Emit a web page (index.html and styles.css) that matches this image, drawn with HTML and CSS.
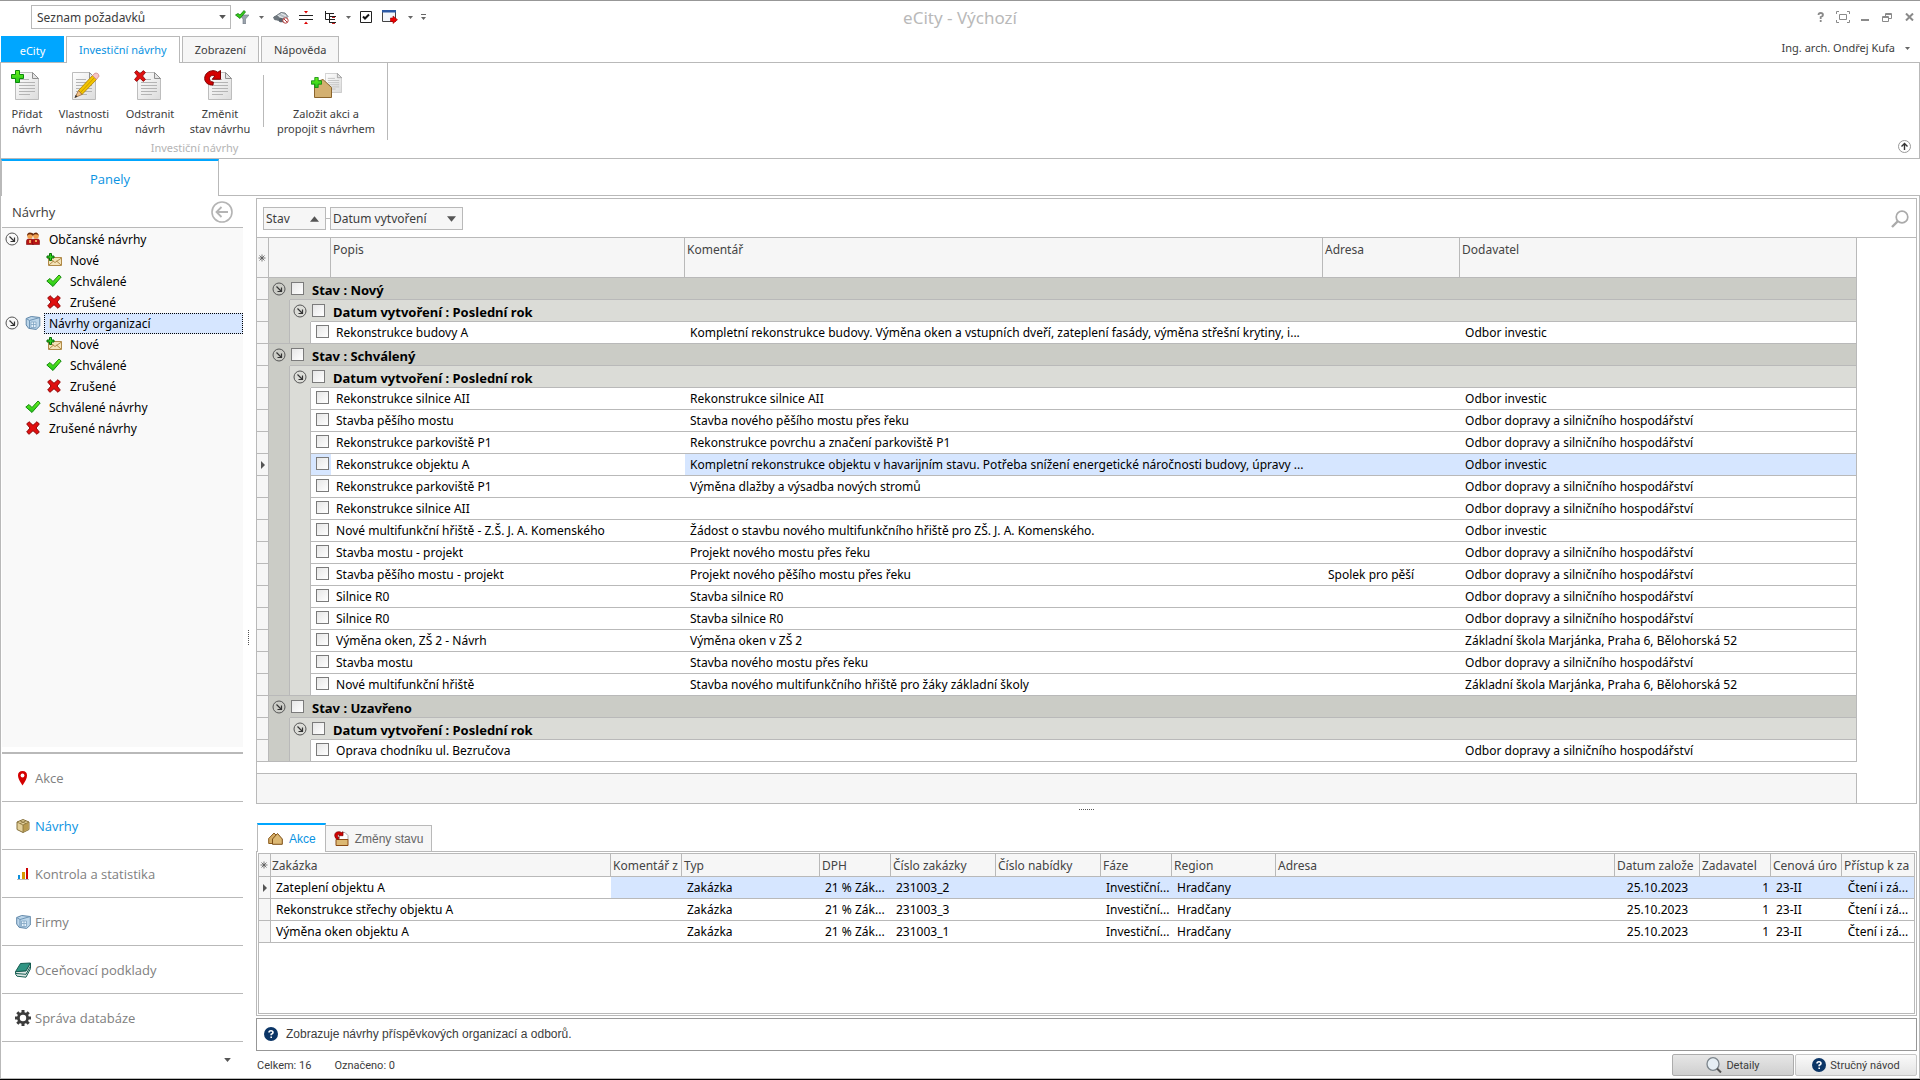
FILE: index.html
```html
<!DOCTYPE html>
<html lang="cs">
<head>
<meta charset="utf-8">
<title>eCity - Výchozí</title>
<link rel="stylesheet" href="styles.css">
</head>
<body>
<svg class="defs" aria-hidden="true">
  <defs>
    <linearGradient id="paper" x1="0" y1="0" x2="1" y2="1"><stop offset="0" stop-color="#fff"/><stop offset="1" stop-color="#dcdcdc"/></linearGradient>
    <linearGradient id="leaf" x1="0" y1="0" x2="0" y2="1"><stop offset="0" stop-color="#6cf21c"/><stop offset="1" stop-color="#1fc41a"/></linearGradient>
  </defs>
  <symbol id="doc" viewBox="0 0 24 28">
    <path d="M.5.5h17l6 6v21H.5z" fill="url(#paper)" stroke="#bdbdbd"/>
    <path d="M17.500.5v6h6z" fill="#e4e4e4" stroke="#8f8f8f"/>
    <path d="M4 7.500h10M4 10.500h16M4 13.500h16M4 16.500h16M4 19.500h16M4 22.500h11" stroke="#b4b4b4"/>
  </symbol>
  <symbol id="plus" viewBox="0 0 13 13"><path d="M4.500.5h4v4h4v4h-4v4h-4v-4h-4v-4h4z" fill="url(#leaf)" stroke="#0c8a0c"/></symbol>
  <symbol id="cross" viewBox="0 0 14 14"><path d="M3 .7 7 4.300 11 .7 13.300 3 10 7l3.300 4L11 13.300 7 9.700 3 13.300.7 11 4 7 .7 3z" fill="#e01010" stroke="#8f0505"/></symbol>
  <symbol id="check" viewBox="0 0 16 14"><path d="M.8 7 4 4.500l3 3L13 1l2.200 2L7 12.500z" fill="url(#leaf)" stroke="#168a10"/></symbol>
  <symbol id="redo" viewBox="0 0 18 16"><path d="M9 15C4.500 15.500.7 12.500.7 8.500.7 3.500 5 .7 9 .7c2 0 3.500.6 4.800 1.600L16.500.5v8.700H8.300l2.500-3C7.500 4.500 5.500 6.500 5.500 8.700c0 2.300 1.800 3.500 3.800 3.300z" fill="#d40000" stroke="#7d0000"/></symbol>
  <symbol id="down" viewBox="0 0 5 3"><path d="M0 0h5L2.500 3z" fill="#666"/></symbol>
  <symbol id="tri" viewBox="0 0 10 6"><path d="M0 0h10L5 6z" fill="#555"/></symbol>
  <symbol id="expand" viewBox="0 0 14 14"><circle cx="7" cy="7" r="6" fill="none" stroke="#555"/><path d="M4.500 4.500 9 9M9.500 5.500v4h-4" fill="none" stroke="#333" stroke-width="1.200"/></symbol>
  <symbol id="star" viewBox="0 0 8 8"><path d="M4 .5v7M.5 4h7M1.500 1.500l5 5M6.500 1.500l-5 5" stroke="#555" stroke-width=".8"/></symbol>
  <symbol id="here" viewBox="0 0 4 8"><path d="M0 0 4 4 0 8z" fill="#555"/></symbol>
  <symbol id="mail" viewBox="0 0 16 14"><path d="M2.500 4.500h13v8h-13z" fill="#f4e3b8" stroke="#b08a48"/><path d="m3 5 6 4.500L15.500 5M3 12l4.500-4M15 12l-4.500-4" fill="none" stroke="#b08a48"/><path d="M3.500.5h2v2.500H8v2H5.500v2.500h-2V5H1V3h2.500z" fill="#2fd31c" stroke="#0a6d0a"/></symbol>
  <symbol id="people" viewBox="0 0 14 13"><path d="M.5 12.500V9q0-2 2-2h3q2 0 2 2v3.500z" fill="#b81414" stroke="#7a0c0c" stroke-width=".6"/><path d="M6.500 12.500V9q0-2 2-2h3q2 0 2 2v3.500z" fill="#b81414" stroke="#7a0c0c" stroke-width=".6"/><path d="M3 8h2v3H3zM9 8h2v2H9z" fill="#f2a35c"/><circle cx="4" cy="4" r="2.800" fill="#f0a050"/><circle cx="10" cy="4" r="2.800" fill="#f0a050"/><path d="M1 4q0-3.500 3-3.500T7 2Q8 .5 10 .5T13 4Q12.500 2.500 10 2.300T7 4Q6 2.300 4 2.300T1 4z" fill="#6b2a0a"/></symbol>
  <symbol id="firm" viewBox="0 0 15 14"><path d="m.7 2.500 5-2 8.600 1v8.500l-3.600 3.400-7.500-1-2.500-3.400z" fill="#bcd6ea" stroke="#5f86a8"/><path d="M.7 2.500 4 4.500l10.300-3M4 4.500v8" fill="none" stroke="#6f95b6"/><path d="M5.500 6h5v5.500h-5z" fill="#e4f1fb" stroke="#7fa3c2" stroke-width=".8"/><path d="M8 6v5.500M5.500 8.500h5" stroke="#7fa3c2" stroke-width=".8"/></symbol>
  <symbol id="help" viewBox="0 0 14 14"><circle cx="7" cy="7" r="7" fill="#0b3566"/><path d="M5 5.500Q5 3.800 7 3.800T9 5.500Q9 6.500 7.200 7.200V8.300M7.200 9.500v1.500" fill="none" stroke="#fff" stroke-width="1.600"/></symbol>
</svg>

<div class="app">
  <header class="titlebar">
    <div class="quick">
      <div class="combo">
        <select aria-label="Seznam"><option>Seznam požadavků</option></select>
        <svg class="combo-arrow" width="7" height="4"><use href="#tri"/></svg>
      </div>
      <button class="tool" aria-label="Filtr"><svg width="14" height="14" viewBox="0 0 14 14"><path d="M5 5h9l-3.500 4v5H8V9z" fill="#9aa3ad" stroke="#6d7680" stroke-width=".6"/><path d="M.5 5 3 3.500 5 5 9 .5 10.500 2 5 8.500z" fill="#35cc1a" stroke="#137a0c" stroke-width=".8"/></svg></button>
      <button class="tool drop" aria-label="Možnosti filtru"><svg width="5" height="3"><use href="#down"/></svg></button>
      <button class="tool" aria-label="Hledat"><svg width="16" height="13" viewBox="0 0 16 13"><path d="M.5 6.500 8 1.500l4 .5 3 3.500-3 3-5 1-3-.5z" fill="#b4bcc2" stroke="#59626a" stroke-width=".8"/><ellipse cx="3.500" cy="7" rx="3" ry="2.300" fill="#6d767d"/><ellipse cx="8.500" cy="9" rx="3" ry="2.300" fill="#59626a"/><path d="m5 4.500 5 2.500M8 2.500l5 2.500" stroke="#eef1f3"/><circle cx="12.500" cy="9.500" r="2.700" fill="#fff" stroke="#b03838"/><path d="m11 8 3 3" stroke="#b03838"/></svg></button>
      <button class="tool split" aria-label="Rozdělit"><svg width="14" height="13" viewBox="0 0 14 13"><path d="M0 4.500h14M0 8.500h14" stroke="#222"/><path d="M5 0h4L7 2.500zM5 13h4l-2-2.500z" fill="#d00"/></svg></button>
      <button class="tool" aria-label="Strom"><svg width="11" height="13" viewBox="0 0 11 13"><path d="M.5 0v8.500h3.500M.5 2.500H9M4.500 2.500v9.500M4.500 5.500H11M4.500 8.500H10M4.500 11.500H11" fill="none" stroke="#222"/><path d="M7 6.500h3M7 12.500h3" stroke="#c22"/></svg></button>
      <button class="tool drop" aria-label="Možnosti stromu"><svg width="5" height="3"><use href="#down"/></svg></button>
      <button class="tool" aria-label="Označit"><svg width="12" height="12" viewBox="0 0 12 12"><path d="M.5.5h11v11H.5z" fill="#fff" stroke="#222"/><path d="m3 5.500 2 2 4-4" fill="none" stroke="#111" stroke-width="2"/></svg></button>
      <button class="tool" aria-label="Okno"><svg width="16" height="14" viewBox="0 0 16 14"><path d="M.5.5h13v11H.5z" fill="#f3f6fb" stroke="#444"/><path d="M0 0h14v2.500H0z" fill="#2a58a5"/><path d="M8.500 8H11V6l4.500 3.700L11 13.500v-2H8.500z" fill="#e00" stroke="#900" stroke-width=".6"/></svg></button>
      <button class="tool last" aria-label="Možnosti okna"><svg width="5" height="3"><use href="#down"/></svg></button>
      <button class="tool last" aria-label="Upravit panel"><svg width="5" height="6" viewBox="0 0 5 6"><path d="M0 0h5v1H0zM0 3h5L2.500 6z" fill="#666"/></svg></button>
    </div>
    <h1 class="title">eCity - Výchozí</h1>
    <div class="window-buttons">
      <button class="win" aria-label="Pomoc"><svg width="8" height="10" viewBox="0 0 8 10"><path d="M1.500 3Q1.500 1 3.700 1T6 3Q6 4.200 3.700 5V7M3.700 8v2" fill="none" stroke="#8a8a8a" stroke-width="1.800"/></svg></button>
      <button class="win" aria-label="Celá obrazovka"><svg width="14" height="12" viewBox="0 0 14 12"><path d="M.5 3V.5H3M11 .5h2.500V3M13.500 9v2.500H11M3 11.500H.5V9M3.500 3.500h7v5h-7z" fill="none" stroke="#8a8a8a"/></svg></button>
      <button class="win" aria-label="Minimalizovat"><svg width="8" height="8" viewBox="0 0 8 8"><path d="M0 6h8v2H0z" fill="#8a8a8a"/></svg></button>
      <button class="win" aria-label="Obnovit"><svg width="10" height="9" viewBox="0 0 10 9"><path d="M3.500 3V.5h6v5H7M.5 3.500h6v5h-6zM3 1.500h7M0 4.500h7" fill="none" stroke="#8a8a8a"/></svg></button>
      <button class="win" aria-label="Zavřít"><svg width="9" height="8" viewBox="0 0 9 8"><path d="m1 .5 7 7M8 .5l-7 7" stroke="#8a8a8a" stroke-width="2"/></svg></button>
    </div>
  </header>

  <nav class="tabs">
    <button class="tab app-tab">eCity</button>
    <button class="tab current">Investiční návrhy</button>
    <button class="tab">Zobrazení</button>
    <button class="tab">Nápověda</button>
    <button class="user">Ing. arch. Ondřej Kufa <svg width="5" height="3"><use href="#down"/></svg></button>
  </nav>

  <section class="ribbon">
    <div class="ribbon-group">
      <div class="ribbon-buttons">
        <button class="cmd narrow"><svg width="32" height="32"><use href="#doc" x="4" y="3" width="24" height="28"/><use href="#plus" x="0" y="1" width="13" height="13"/></svg>Přidat<br>návrh</button>
        <button class="cmd medium"><svg width="32" height="32" viewBox="0 0 32 32"><use href="#doc" x="4" y="3" width="24" height="28"/><path d="M10.500 21.500 24.500 6.500l4 4-14.500 15z" fill="#f2c400" stroke="#a87c00" stroke-width=".8"/><path d="m12.500 23.500 14-15" stroke="#c89a00"/><path d="m24.500 6.500 2.500-2.300q3.500-.7 4 3l-2.500 3.300z" fill="#f6c6c6" stroke="#c88" stroke-width=".8"/><path d="m10.500 21.500 3.500 4-7 3z" fill="#f0bf86" stroke="#94622c" stroke-width=".7"/><path d="m6.500 28.800 1.300-3 1.700 2z" fill="#333"/></svg>Vlastnosti<br>návrhu</button>
        <button class="cmd"><svg width="32" height="32"><use href="#doc" x="3" y="3" width="24" height="28"/><use href="#cross" x="0" y="1" width="12" height="12"/></svg>Odstranit<br>návrh</button>
        <button class="cmd"><svg width="32" height="32"><use href="#doc" x="4" y="3" width="24" height="28"/><use href="#redo" x="0" y="1" width="18" height="16"/></svg>Změnit<br>stav návrhu</button>
        <span class="divider"></span>
        <button class="cmd wide"><svg width="32" height="32"><use href="#doc" x="15" y="4" width="17" height="20"/><path d="M4.500 28.500v-15L13 10.500l8.500 8v10z" fill="#d3b071" stroke="#8a642c"/><use href="#plus" x="1" y="8" width="11" height="11"/></svg>Založit akci a<br>propojit s návrhem</button>
      </div>
      <div class="group-name">Investiční návrhy</div>
    </div>
    <button class="collapse" aria-label="Sbalit pás"><svg width="13" height="13" viewBox="0 0 13 13"><circle cx="6.500" cy="6.500" r="6" fill="none" stroke="#999"/><path d="M6.500 10V4M3.500 6.500l3-3 3 3" fill="none" stroke="#333" stroke-width="1.400"/></svg></button>
  </section>

  <div class="panel-tabs"><button class="panel-tab">Panely</button></div>

  <main class="main">
    <aside class="sidebar">
      <div class="side-head"><h2>Návrhy</h2><button class="back" aria-label="Zpět"><svg width="22" height="22" viewBox="0 0 22 22"><circle cx="11" cy="11" r="10" fill="none" stroke="#b4b4b4" stroke-width="1.600"/><path d="M17 11H6M10.500 6l-5 5 5 5" fill="none" stroke="#b4b4b4" stroke-width="1.800"/></svg></button></div>
      <ul class="tree">
        <li><svg class="fold" width="14" height="14"><use href="#expand"/></svg><svg class="pic" width="14" height="13"><use href="#people"/></svg><span>Občanské návrhy</span></li>
        <li class="sub"><svg class="pic" width="16" height="14"><use href="#mail"/></svg><span>Nové</span></li>
        <li class="sub"><svg class="pic" width="16" height="14"><use href="#check"/></svg><span>Schválené</span></li>
        <li class="sub"><svg class="pic" width="16" height="14"><use href="#cross"/></svg><span>Zrušené</span></li>
        <li class="chosen"><svg class="fold" width="14" height="14"><use href="#expand"/></svg><svg class="pic" width="15" height="14"><use href="#firm"/></svg><span>Návrhy organizací</span></li>
        <li class="sub"><svg class="pic" width="16" height="14"><use href="#mail"/></svg><span>Nové</span></li>
        <li class="sub"><svg class="pic" width="16" height="14"><use href="#check"/></svg><span>Schválené</span></li>
        <li class="sub"><svg class="pic" width="16" height="14"><use href="#cross"/></svg><span>Zrušené</span></li>
        <li class="leaf"><svg class="pic" width="16" height="14"><use href="#check"/></svg><span>Schválené návrhy</span></li>
        <li class="leaf"><svg class="pic" width="16" height="14"><use href="#cross"/></svg><span>Zrušené návrhy</span></li>
      </ul>
      <nav class="modules">
        <a href="#akce"><svg width="16" height="16" viewBox="0 0 16 16"><path d="M7.500 15.500Q3 9 3 5.500 3 1 7.500 1T12 5.500Q12 9 7.500 15.500z" fill="#d40000"/><circle cx="7.500" cy="5.500" r="1.900" fill="#fff"/></svg>Akce</a>
        <a href="#navrhy" class="active"><svg width="16" height="16" viewBox="0 0 16 16"><path d="m8 1.500 6 2.500v7.500l-6 3-6-3V4z" fill="#e3d09a" stroke="#85703a"/><path d="m8 7 5.500-2.700v6.900L8 14z" fill="#b99b50"/><path d="m2 4 6 3 6-3M8 7v7.500M5 2.800l6 2.800M11 2.800 5 5.600" fill="none" stroke="#85703a" stroke-width=".8"/></svg>Návrhy</a>
        <a href="#kontrola"><svg width="16" height="16" viewBox="0 0 16 16"><path d="M3 9h2v4H3z" fill="#0a8fdc"/><path d="M7 6h3v7H7z" fill="#d89a00"/><path d="M11 2h2v11h-2z" fill="#c00"/><path d="M2 13.500h12" stroke="#bbb"/></svg>Kontrola a statistika</a>
        <a href="#firmy"><svg width="16" height="16"><use href="#firm" x="1" y="1" width="15" height="14"/></svg>Firmy</a>
        <a href="#podklady"><svg width="16" height="16" viewBox="0 0 16 16"><path d="M5.500 1.500 15.500 1 11 9l-10.500.7z" fill="#2f9483" stroke="#155c50"/><path d="M.5 9.700q-.5 3 1.500 4.500l9 1 4.500-8.500V1L11 9z" fill="#dfe8e6" stroke="#155c50"/><path d="m1 11.500 10 .8L15.500 4" fill="none" stroke="#155c50"/></svg>Oceňovací podklady</a>
        <a href="#sprava"><svg width="16" height="16" viewBox="0 0 16 16"><circle cx="8" cy="8" r="4.600" fill="none" stroke="#3c3c3c" stroke-width="2.800"/><path d="M8 0v3M8 13v3M0 8h3M13 8h3M2.300 2.300l2.200 2.200M11.500 11.500l2.200 2.200M13.700 2.300l-2.200 2.200M4.500 11.500l-2.200 2.200" stroke="#3c3c3c" stroke-width="3"/></svg>Správa databáze</a>
      </nav>
      <div class="side-foot"><svg width="7" height="4"><use href="#tri"/></svg></div>
    </aside>
    <div class="splitter"></div>

    <div class="content">
      <section class="grid-panel">
        <div class="group-bar">
          <button class="group-key short">Stav <svg width="9" height="6" viewBox="0 0 10 6"><path d="M0 6h10L5 0z" fill="#555"/></svg></button>
          <span class="link"></span>
          <button class="group-key long">Datum vytvoření <svg width="9" height="6"><use href="#tri"/></svg></button>
          <button class="search" aria-label="Hledat"><svg width="18" height="18" viewBox="0 0 18 18"><circle cx="11" cy="7" r="5.800" fill="none" stroke="#aaa" stroke-width="1.700"/><path d="m7 11-6 6" stroke="#aaa" stroke-width="2.400"/></svg></button>
        </div>
        <table class="grid proposals">
          <colgroup><col class="c-mark"><col class="c-fold"><col class="c-fold"><col class="c-tick"><col class="c-desc"><col class="c-note"><col class="c-addr"><col></colgroup>
          <thead><tr><th class="mark"><svg width="8" height="8"><use href="#star"/></svg></th><th colspan="3"></th><th>Popis</th><th>Komentář</th><th>Adresa</th><th>Dodavatel</th></tr></thead>
          <tbody>
            <tr class="g1"><td class="mark"></td><td class="fold"><svg width="14" height="14"><use href="#expand"/></svg></td><td colspan="6"><label><input type="checkbox"><span>Stav : Nový</span></label></td></tr>
            <tr class="g2"><td class="mark"></td><td class="in1"></td><td class="fold"><svg width="14" height="14"><use href="#expand"/></svg></td><td colspan="5"><label><input type="checkbox"><span>Datum vytvoření : Poslední rok</span></label></td></tr>
            <tr class="end"><td class="mark"></td><td class="in1"></td><td class="in2"></td><td class="tick"><input type="checkbox" aria-label="Vybrat"></td><td>Rekonstrukce budovy A</td><td>Kompletní rekonstrukce budovy. Výměna oken a vstupních dveří, zateplení fasády, výměna střešní krytiny, i...</td><td></td><td>Odbor investic</td></tr>
            <tr class="g1"><td class="mark"></td><td class="fold"><svg width="14" height="14"><use href="#expand"/></svg></td><td colspan="6"><label><input type="checkbox"><span>Stav : Schválený</span></label></td></tr>
            <tr class="g2"><td class="mark"></td><td class="in1"></td><td class="fold"><svg width="14" height="14"><use href="#expand"/></svg></td><td colspan="5"><label><input type="checkbox"><span>Datum vytvoření : Poslední rok</span></label></td></tr>
            <tr><td class="mark"></td><td class="in1"></td><td class="in2"></td><td class="tick"><input type="checkbox" aria-label="Vybrat"></td><td>Rekonstrukce silnice AII</td><td>Rekonstrukce silnice AII</td><td></td><td>Odbor investic</td></tr>
            <tr><td class="mark"></td><td class="in1"></td><td class="in2"></td><td class="tick"><input type="checkbox" aria-label="Vybrat"></td><td>Stavba pěšího mostu</td><td>Stavba nového pěšího mostu přes řeku</td><td></td><td>Odbor dopravy a silničního hospodářství</td></tr>
            <tr><td class="mark"></td><td class="in1"></td><td class="in2"></td><td class="tick"><input type="checkbox" aria-label="Vybrat"></td><td>Rekonstrukce parkoviště P1</td><td>Rekonstrukce povrchu a značení parkoviště P1</td><td></td><td>Odbor dopravy a silničního hospodářství</td></tr>
            <tr class="selected"><td class="mark"><svg width="4" height="8"><use href="#here"/></svg></td><td class="in1"></td><td class="in2"></td><td class="tick"><input type="checkbox" aria-label="Vybrat"></td><td class="focus">Rekonstrukce objektu A</td><td>Kompletní rekonstrukce objektu v havarijním stavu. Potřeba snížení energetické náročnosti budovy, úpravy ...</td><td></td><td>Odbor investic</td></tr>
            <tr><td class="mark"></td><td class="in1"></td><td class="in2"></td><td class="tick"><input type="checkbox" aria-label="Vybrat"></td><td>Rekonstrukce parkoviště P1</td><td>Výměna dlažby a výsadba nových stromů</td><td></td><td>Odbor dopravy a silničního hospodářství</td></tr>
            <tr><td class="mark"></td><td class="in1"></td><td class="in2"></td><td class="tick"><input type="checkbox" aria-label="Vybrat"></td><td>Rekonstrukce silnice AII</td><td></td><td></td><td>Odbor dopravy a silničního hospodářství</td></tr>
            <tr><td class="mark"></td><td class="in1"></td><td class="in2"></td><td class="tick"><input type="checkbox" aria-label="Vybrat"></td><td>Nové multifunkční hřiště - Z.Š. J. A. Komenského</td><td>Žádost o stavbu nového multifunkčního hřiště pro ZŠ. J. A. Komenského.</td><td></td><td>Odbor investic</td></tr>
            <tr><td class="mark"></td><td class="in1"></td><td class="in2"></td><td class="tick"><input type="checkbox" aria-label="Vybrat"></td><td>Stavba mostu - projekt</td><td>Projekt nového mostu přes řeku</td><td></td><td>Odbor dopravy a silničního hospodářství</td></tr>
            <tr><td class="mark"></td><td class="in1"></td><td class="in2"></td><td class="tick"><input type="checkbox" aria-label="Vybrat"></td><td>Stavba pěšího mostu - projekt</td><td>Projekt nového pěšího mostu přes řeku</td><td>Spolek pro pěší</td><td>Odbor dopravy a silničního hospodářství</td></tr>
            <tr><td class="mark"></td><td class="in1"></td><td class="in2"></td><td class="tick"><input type="checkbox" aria-label="Vybrat"></td><td>Silnice R0</td><td>Stavba silnice R0</td><td></td><td>Odbor dopravy a silničního hospodářství</td></tr>
            <tr><td class="mark"></td><td class="in1"></td><td class="in2"></td><td class="tick"><input type="checkbox" aria-label="Vybrat"></td><td>Silnice R0</td><td>Stavba silnice R0</td><td></td><td>Odbor dopravy a silničního hospodářství</td></tr>
            <tr><td class="mark"></td><td class="in1"></td><td class="in2"></td><td class="tick"><input type="checkbox" aria-label="Vybrat"></td><td>Výměna oken, ZŠ 2 - Návrh</td><td>Výměna oken v ZŠ 2</td><td></td><td>Základní škola Marjánka, Praha 6, Bělohorská 52</td></tr>
            <tr><td class="mark"></td><td class="in1"></td><td class="in2"></td><td class="tick"><input type="checkbox" aria-label="Vybrat"></td><td>Stavba mostu</td><td>Stavba nového mostu přes řeku</td><td></td><td>Odbor dopravy a silničního hospodářství</td></tr>
            <tr class="end"><td class="mark"></td><td class="in1"></td><td class="in2"></td><td class="tick"><input type="checkbox" aria-label="Vybrat"></td><td>Nové multifunkční hřiště</td><td>Stavba nového multifunkčního hřiště pro žáky základní školy</td><td></td><td>Základní škola Marjánka, Praha 6, Bělohorská 52</td></tr>
            <tr class="g1"><td class="mark"></td><td class="fold"><svg width="14" height="14"><use href="#expand"/></svg></td><td colspan="6"><label><input type="checkbox"><span>Stav : Uzavřeno</span></label></td></tr>
            <tr class="g2"><td class="mark"></td><td class="in1"></td><td class="fold"><svg width="14" height="14"><use href="#expand"/></svg></td><td colspan="5"><label><input type="checkbox"><span>Datum vytvoření : Poslední rok</span></label></td></tr>
            <tr class="end"><td class="mark"></td><td class="in1"></td><td class="in2"></td><td class="tick"><input type="checkbox" aria-label="Vybrat"></td><td>Oprava chodníku ul. Bezručova</td><td></td><td></td><td>Odbor dopravy a silničního hospodářství</td></tr>
          </tbody>
        </table>
        <div class="grid-foot"></div>
      </section>

      <div class="hsplitter"></div>

      <div class="detail-tabs">
        <button class="detail-tab current"><svg width="15" height="13" viewBox="0 0 15 13"><path d="M.7 11.500V6.500L6 1l5 5v5.500z" fill="#d3ac66" stroke="#8a5a1c"/><path d="M4.500 12.300V7L9.500 1.500 14.300 7v5.300z" fill="#dcb873" stroke="#7d4e14"/></svg>Akce</button>
        <button class="detail-tab"><svg width="15" height="15" viewBox="0 0 15 15"><path d="M6 1.500h5l3 3V9H5z" fill="#fff" stroke="#aaa"/><path d="M2 8.500h12v6H2z" fill="#dcb873" stroke="#8a4a14"/><path d="M4.500 8.500Q.7 8 .7 4.500.7.7 5 .7q1.500 0 2.500 1L9 .7v4H5l1-1.300Q3.500 3 3.500 5q0 1.200 1.500 1.300z" fill="#d40000" stroke="#7d0000" stroke-width=".7"/></svg>Změny stavu</button>
      </div>
      <section class="detail">
        <div class="detail-inner">
          <table class="grid jobs">
            <colgroup><col class="c-mark"><col class="j-340"><col class="j-71"><col class="j-138"><col class="j-71"><col class="j-105"><col class="j-105"><col class="j-71"><col class="j-104"><col><col class="j-85"><col class="j-71"><col class="j-71"><col class="j-72"></colgroup>
            <thead><tr><th class="mark"><svg width="8" height="8"><use href="#star"/></svg></th><th class="tight">Zakázka</th><th>Komentář z</th><th>Typ</th><th>DPH</th><th>Číslo zakázky</th><th>Číslo nabídky</th><th>Fáze</th><th>Region</th><th>Adresa</th><th>Datum založe</th><th>Zadavatel</th><th>Cenová úro</th><th>Přístup k za</th></tr></thead>
            <tbody>
              <tr class="selected"><td class="mark"><svg width="4" height="8"><use href="#here"/></svg></td><td class="focus">Zateplení objektu A</td><td></td><td>Zakázka</td><td>21 % Zák...</td><td>231003_2</td><td></td><td>Investiční...</td><td>Hradčany</td><td></td><td class="mid">25.10.2023</td><td class="num">1</td><td>23-II</td><td class="mid">Čtení i zá...</td></tr>
              <tr><td class="mark"></td><td>Rekonstrukce střechy objektu A</td><td></td><td>Zakázka</td><td>21 % Zák...</td><td>231003_3</td><td></td><td>Investiční...</td><td>Hradčany</td><td></td><td class="mid">25.10.2023</td><td class="num">1</td><td>23-II</td><td class="mid">Čtení i zá...</td></tr>
              <tr><td class="mark"></td><td>Výměna oken objektu A</td><td></td><td>Zakázka</td><td>21 % Zák...</td><td>231003_1</td><td></td><td>Investiční...</td><td>Hradčany</td><td></td><td class="mid">25.10.2023</td><td class="num">1</td><td>23-II</td><td class="mid">Čtení i zá...</td></tr>
            </tbody>
          </table>
        </div>
      </section>
      <div class="info"><svg width="14" height="14"><use href="#help"/></svg>Zobrazuje návrhy příspěvkových organizací a odborů.</div>
      <footer class="status">
        <span>Celkem: 16</span><span>Označeno: 0</span>
        <div class="status-buttons">
          <button class="push pressed"><svg width="16" height="16" viewBox="0 0 16 16"><ellipse cx="7" cy="7" rx="6" ry="6.300" fill="#e6eef4" stroke="#7c858c" stroke-width="1.300"/><path d="m11 11.500 4 4" stroke="#555" stroke-width="2"/></svg>Detaily</button>
          <button class="push"><svg width="14" height="14"><use href="#help"/></svg>Stručný návod</button>
        </div>
      </footer>
    </div>
  </main>
</div>
</body>
</html>
```
FILE: styles.css
```css
* { box-sizing: border-box; }
body { margin: 0; background: #fff; color: #3c3c3c; font: 12px/16px "Noto Sans", sans-serif; }
button { margin: 0; padding: 0; border: 0; background: none; color: inherit; font: inherit; }
svg { display: block; flex: none; }
.defs { position: absolute; width: 0; height: 0; }

.app { display: flex; flex-direction: column; min-height: 100vh; border-top: 1px solid #979797; border-bottom: 1px solid #000; }

.titlebar { display: grid; grid-template-columns: 1fr auto 1fr; align-items: center; height: 32px; margin-bottom: 3px; }
.quick { display: flex; align-items: center; padding-left: 31px; }
.combo { display: flex; align-items: center; width: 200px; height: 24px; margin-right: 4px; border: 1px solid #b9b9b9; }
.combo select { flex: 1; height: 22px; padding: 0 5px; border: 0; background: #fff; color: #3c3c3c; font: 12px "Noto Sans", sans-serif; appearance: none; }
.combo-arrow { margin-right: 4px; }
.tool { margin-right: 10px; }
.tool.split { margin-right: 12px; }
.tool.drop { margin-right: 9px; }
.tool.last { margin-right: 8px; }
.title { margin: 0; padding-top: 1px; color: #b9b9b9; font-size: 17px; font-weight: 400; line-height: 24px; }
.window-buttons { display: flex; justify-content: flex-end; }
.win { display: flex; align-items: center; justify-content: center; width: 22px; height: 16px; }

.tabs { display: flex; gap: 2px; padding-left: 1px; height: 26px; font-size: 11px; }
.tab { height: 26px; padding: 0 12px; border: 1px solid #b9b9b9; border-bottom: 0; background: #f6f6f6; }
.app-tab { width: 63px; padding: 4px 0 0; border: 0; background: #00a6ff; color: #fff; }
.tab.current { z-index: 1; height: 27px; padding: 0 12px; background: #fff; color: #0a93e2; }
.user { display: flex; align-items: center; gap: 10px; margin-left: auto; padding: 0 10px 2px 0; }

.ribbon { display: flex; justify-content: space-between; align-items: flex-end; border: 1px solid #b9b9b9; }
.ribbon-group { align-self: stretch; font-size: 11px; line-height: 15px; }
.ribbon-buttons { display: flex; height: 77px; padding: 6px 7px 0 0; border-right: 1px solid #b9b9b9; }
.cmd { display: flex; flex-direction: column; align-items: center; width: 70px; line-height: 15px; }
.cmd svg { margin-bottom: 5px; }
.cmd.narrow { width: 52px; }
.cmd.medium { width: 62px; }
.cmd.wide { width: 108px; }
.divider { height: 52px; margin: 6px 8px 0; border-left: 1px solid #b9b9b9; }
.group-name { padding-bottom: 3px; color: #b4b4b4; text-align: center; }
.collapse { margin: 0 8px 5px 0; }

.panel-tabs { display: flex; height: 37px; border-left: 1px solid #b9b9b9; }
.panel-tabs::after { content: ""; flex: 1; border-bottom: 1px solid #b9b9b9; }
.panel-tab { width: 218px; border: solid #b9b9b9; border-width: 2px 1px 0; border-top-color: #00a6ff; color: #0a93e2; font: 500 13px "Open Sans", sans-serif; }

.main { display: flex; flex: 1; border: solid #b9b9b9; border-width: 0 1px 1px; }
.sidebar { display: flex; flex-direction: column; width: 242px; padding-left: 1px; }
.side-head { display: flex; align-items: center; justify-content: space-between; height: 32px; padding: 0 10px; border-bottom: 1px solid #b9b9b9; }
.side-head h2 { margin: 0; color: #3c3c3c; font: 500 13px "Open Sans", sans-serif; }
.tree { flex: 1; margin: 0 0 5px; padding: 1px 0 0 3px; background: #f9f9f9; color: #000; list-style: none; }
.tree li { display: flex; align-items: center; height: 21px; }
.tree .pic { width: 16px; margin: 0 3px 2px 6px; }
.tree .fold { margin: 0 0 2px; }
.tree .leaf { padding-left: 14px; }
.tree .sub { padding-left: 35px; }
.tree li span { flex: 1; height: 21px; padding-left: 4px; border: 1px solid transparent; line-height: 20px; }
.tree .chosen span { border: 1px dotted #000; background: #d6e6ff; }
.modules { border-top: 2px solid #b9b9b9; }
.modules a { display: flex; align-items: center; gap: 4px; height: 48px; padding-left: 13px; border-bottom: 1px solid #b9b9b9; color: #808080; font: 500 13px "Open Sans", sans-serif; text-decoration: none; }
.modules a.active { color: #0a93e2; }
.side-foot { display: flex; align-items: center; justify-content: flex-end; height: 36px; padding-right: 12px; }

.splitter { align-self: center; width: 1px; height: 15px; margin: 0 7px 0 5px; border-left: 1px dotted #555; }
.hsplitter { height: 14px; width: 15px; margin: 5px auto 0; border-top: 1px dotted #555; }

.content { display: flex; flex: 1; flex-direction: column; min-width: 0; padding: 2px 2px 0 0; }
.grid-panel { border: 1px solid #b9b9b9; }
.group-bar { display: flex; align-items: center; height: 39px; padding: 1px 7px 0 6px; border-bottom: 1px solid #b9b9b9; }
.group-key { display: flex; align-items: center; justify-content: space-between; height: 23px; padding: 0 6px 0 2px; border: 1px solid #b9b9b9; background: #f6f6f6; }
.short { width: 63px; }
.long { width: 133px; }
.link { width: 4px; border-top: 1px solid #b9b9b9; }
.search { margin-left: auto; }

.grid { border-collapse: separate; border-spacing: 0; table-layout: fixed; width: 100%; color: #000; }
.grid th { padding: 1px 2px 0; border: solid #b9b9b9; border-width: 0 1px 1px 0; background: #f6f6f6; color: #444; font-weight: 400; text-align: left; white-space: nowrap; overflow: hidden; }
.grid td { height: 22px; padding: 1px 2px 0 5px; border-bottom: 1px solid #b9b9b9; line-height: 20px; white-space: nowrap; overflow: hidden; }
.grid .mark { padding: 0 0 0 1px; border-right: 1px solid #b9b9b9; background: #f6f6f6; }
.grid td.mark { padding-left: 4px; }
.grid tr.selected td:not(.mark, .focus, .in1, .in2) { background: #d6e6ff; }
.grid .num { padding-right: 2px; text-align: right; }
.grid .mid { padding: 1px 0 0; text-align: center; }
.c-mark { width: 12px; }
.c-fold { width: 21px; }
.c-tick { width: 20px; }
.c-desc { width: 354px; }
.c-note { width: 638px; }
.c-addr { width: 137px; }

.proposals { width: calc(100% - 59px); }
.proposals th { height: 40px; padding-top: 4px; vertical-align: top; }
.proposals th.mark { padding-top: 0; vertical-align: middle; }
.proposals tr > :last-child { border-right: 1px solid #b9b9b9; }
.proposals .g1 td:not(.mark) { background: #cbccc6; }
.proposals .g2 td:not(.mark) { background: #dbdcd7; }
.proposals td.fold { padding: 0 3px 1px; border-bottom: 0; }
.proposals td.in1, .proposals .g2 td.in1 { border-right: 1px solid #b9b9b9; border-bottom: 0; background: #cbccc6; }
.proposals td.in2 { border-right: 1px solid #b9b9b9; border-bottom: 0; background: #dbdcd7; }
.proposals .end td.in1, .proposals .end td.in2 { border-bottom: 1px solid #b9b9b9; }
.proposals label { display: flex; align-items: center; gap: 8px; height: 20px; margin-left: -4px; font-size: 13px; font-weight: 700; line-height: 18px; }
.proposals label span { padding-top: 2px; }
.proposals .tick { padding: 0 0 0 5px; }
.proposals input { display: block; width: 13px; height: 13px; margin: 0 0 2px; border: 1px solid #7b7b7b; background: linear-gradient(135deg, #e6e6e6, #fff); appearance: none; }
.grid-foot { width: calc(100% - 59px); height: 30px; margin-top: 11px; border: solid #b9b9b9; border-width: 1px 1px 0 0; background: #f6f6f6; }

.detail-tabs { display: flex; align-items: flex-end; height: 28px; padding-left: 1px; font: 12px "Liberation Sans", sans-serif; color: #666; }
.detail-tab { display: flex; align-items: center; gap: 6px; height: 26px; padding: 0 8px; border: 1px solid #b9b9b9; border-width: 1px 1px 0 0; background: #f6f6f6; }
.detail-tab.current { z-index: 1; height: 29px; margin-bottom: -1px; padding: 0 9px 0 10px; border-width: 2px 1px 0; border-top-color: #00a6ff; background: #fff; color: #0a93e2; }
.detail { display: flex; flex: 1; padding: 1px; border: 1px solid #b9b9b9; }
.detail-inner { flex: 1; min-width: 0; border: 1px solid #b9b9b9; }
.jobs th { height: 23px; }
.jobs th.tight { padding-left: 1px; }
.jobs tr > :last-child { border-right: 0; }
.j-340 { width: 340px; }
.j-138 { width: 138px; }
.j-105 { width: 105px; }
.j-104 { width: 104px; }
.j-85 { width: 85px; }
.j-71 { width: 71px; }
.j-72 { width: 72px; }

.info { display: flex; align-items: center; gap: 8px; height: 33px; margin-top: 2px; padding: 0 7px 2px; border: 1px solid #979797; font: 12px "Liberation Sans", sans-serif; }
.status { display: flex; align-items: center; gap: 23px; height: 27px; padding: 1px 0 0 1px; font: 11px Roboto, sans-serif; }
.status-buttons { display: flex; gap: 1px; margin-left: auto; }
.push { display: flex; align-items: center; justify-content: center; gap: 4px; width: 122px; height: 22px; border: 1px solid #c6c6c6; border-radius: 2px; background: linear-gradient(#fafafa, #e4e4e4); }
.push.pressed { border-color: #acacac; background: linear-gradient(#e6e6e6, #cfcfcf); }
```
